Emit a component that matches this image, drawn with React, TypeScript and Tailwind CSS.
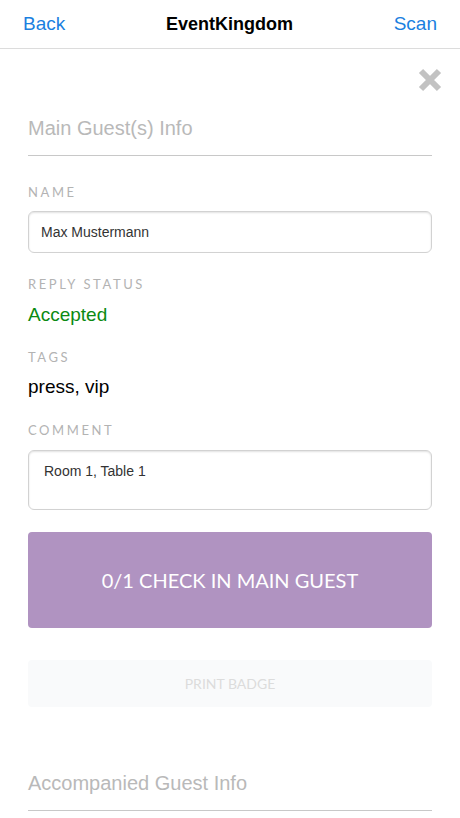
import React from "react";

const gill = { fontFamily: "Lato, 'Open Sans', sans-serif" } as React.CSSProperties;

function Label({ children }: { children: React.ReactNode }) {
  return (
    <div className="text-[13px] leading-none tracking-[2.6px] text-[#b3b3b3] font-['Lato',sans-serif]">{children}</div>
  );
}

export default function App() {
  return (
    <div className="w-[460px] h-[818px] overflow-hidden bg-white font-['Liberation_Sans',Arial,sans-serif]">
      <div className="h-[49px] border-b border-[#dcdcdc] flex items-center justify-between px-[23px]">
        <span className="text-[19px] text-[#1a7fe0]">Back</span>
        <span className="text-[18px] font-bold text-black">EventKingdom</span>
        <span className="text-[19px] text-[#1a7fe0]">Scan</span>
      </div>
      <div className="px-[28px]">
        <div className="flex justify-end pt-[18px] -mr-[11px]">
          <svg width="26" height="26" viewBox="0 0 26 26">
            <path d="M4 4 L22 22 M22 4 L4 22" stroke="#c2c2c2" strokeWidth="6" strokeLinecap="butt" />
          </svg>
        </div>
        <div className="pt-[23px] pb-[15px] border-b border-[#c8c8c8] text-[20px] leading-[24px] text-[#b9b9b9]">
          Main Guest(s) Info
        </div>
        <div className="pt-[30px]"><Label>NAME</Label></div>
        <div className="mt-[12px] h-[42px] rounded-[6px] border border-[#d2d2d2] shadow-[inset_0_1px_2px_rgba(0,0,0,0.12)] flex items-center px-[12px] text-[14px] text-[#333]">
          Max Mustermann
        </div>
        <div className="pt-[25px]"><Label>REPLY STATUS</Label></div>
        <div className="mt-[13px] text-[19px] leading-[22px] text-[#0b8a12]">Accepted</div>
        <div className="pt-[25px]"><Label>TAGS</Label></div>
        <div className="mt-[12px] text-[19px] leading-[22px] text-black">press, vip</div>
        <div className="pt-[26px]"><Label>COMMENT</Label></div>
        <div className="mt-[13px] h-[60px] rounded-[6px] border border-[#d2d2d2] shadow-[inset_0_1px_2px_rgba(0,0,0,0.12)] px-[15px] pt-[11px] text-[14px] leading-[18px] text-[#333]">
          Room 1, Table 1
        </div>
        <div
          className="mt-[22px] h-[96px] rounded-[4px] bg-[#b093c1] flex items-center justify-center text-white text-[20px]"
          style={gill}
        >
          0/1 CHECK IN MAIN GUEST
        </div>
        <div
          className="mt-[32px] h-[47px] rounded-[4px] bg-[#f9fafb] flex items-center justify-center text-[#dcdcdc] text-[14px]"
          style={gill}
        >
          PRINT BADGE
        </div>
        <div className="pt-[64px] pb-[15px] border-b border-[#c8c8c8] text-[20px] leading-[24px] text-[#b9b9b9]">
          Accompanied Guest Info
        </div>
      </div>
    </div>
  );
}
